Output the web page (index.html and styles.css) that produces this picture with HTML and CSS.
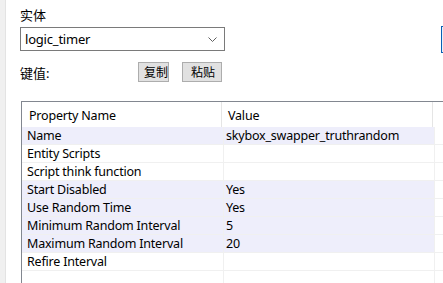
FILE: index.html
```html
<!DOCTYPE html>
<html lang="zh">
<head>
    <meta charset="UTF-8">
    <title>实体属性</title>
    <link rel="stylesheet" href="styles.css">
</head>
<body>
    <div class="side-strip"></div>

    <main class="panel">
        <div class="field-label">实体</div>

        <div class="top-row">
            <div class="combo">
                <span class="combo-text">logic_timer</span>
                <svg class="chevron" width="9" height="5" viewBox="0 0 9 5">
                    <polyline points="0.5,0.5 4.5,4.5 8.5,0.5" fill="none" stroke="#5f5f5f" stroke-width="1"/>
                </svg>
            </div>
            <div class="side-button"></div>
        </div>

        <div class="key-row">
            <span class="key-label">键值:</span>
            <button class="small-btn copy-btn">复制</button>
            <button class="small-btn paste-btn">粘贴</button>
        </div>

        <div class="grid">
            <div class="grid-head">
                <div class="head-cell name-col">Property Name</div>
                <div class="head-cell value-col">Value</div>
                <div class="head-cell filler"></div>
            </div>
            <div class="grid-row changed">
                <div class="cell name-col">Name</div>
                <div class="cell value-col">skybox_swapper_truthrandom</div>
                <div class="cell filler"></div>
            </div>
            <div class="grid-row">
                <div class="cell name-col">Entity Scripts</div>
                <div class="cell value-col"></div>
                <div class="cell filler"></div>
            </div>
            <div class="grid-row">
                <div class="cell name-col">Script think function</div>
                <div class="cell value-col"></div>
                <div class="cell filler"></div>
            </div>
            <div class="grid-row changed">
                <div class="cell name-col">Start Disabled</div>
                <div class="cell value-col">Yes</div>
                <div class="cell filler"></div>
            </div>
            <div class="grid-row changed">
                <div class="cell name-col">Use Random Time</div>
                <div class="cell value-col">Yes</div>
                <div class="cell filler"></div>
            </div>
            <div class="grid-row changed">
                <div class="cell name-col">Minimum Random Interval</div>
                <div class="cell value-col">5</div>
                <div class="cell filler"></div>
            </div>
            <div class="grid-row changed">
                <div class="cell name-col">Maximum Random Interval</div>
                <div class="cell value-col">20</div>
                <div class="cell filler"></div>
            </div>
            <div class="grid-row">
                <div class="cell name-col">Refire Interval</div>
                <div class="cell value-col"></div>
                <div class="cell filler"></div>
            </div>
            <div class="grid-row">
                <div class="cell name-col"></div>
                <div class="cell value-col"></div>
                <div class="cell filler"></div>
            </div>
        </div>
    </main>
</body>
</html>
```

FILE: styles.css
```css
/* Reset */
* {
    margin: 0;
    padding: 0;
    box-sizing: border-box;
}

body {
    width: 443px;
    height: 283px;
    overflow: hidden;
    display: flex;
    background: #fff;
    color: #000;
    font-family: 'Noto Sans', 'Noto Sans CJK SC', sans-serif;
    font-size: 12.5px;
    letter-spacing: -0.2px;
    line-height: 17px;
}

/* Left edge of the dialog */
.side-strip {
    flex: 0 0 6px;
    background: #f0f0f0;
    border-right: 1px solid #e3e3e3;
}

.panel {
    flex: 1;
    padding-left: 14px;
    padding-top: 7px;
    min-width: 0;
    overflow: hidden;
}

.field-label {
    height: 20px;
    font-size: 13px;
    letter-spacing: 0;
}

/* Entity class combo */
.top-row {
    display: flex;
    align-items: flex-start;
    height: 24px;
}

.combo {
    flex: 0 0 205px;
    height: 24px;
    border: 1px solid #7a7a7a;
    display: flex;
    align-items: center;
    justify-content: space-between;
    padding: 0 4px;
}

.combo-text {
    font-size: 13px;
}

.chevron {
    margin-right: 3px;
}

/* focused button peeking in at the right edge */
.side-button {
    flex: 0 0 2px;
    margin-left: 216px;
    margin-top: -1px;
    height: 27px;
    border: 1px solid #0a5fb4;
    border-right: none;
    background: #e5f1fb;
}

/* Key / value row */
.key-row {
    display: flex;
    align-items: center;
    margin-top: 11px;
    height: 20px;
    font-size: 13px;
    letter-spacing: 0;
}

.key-label {
    width: 118px;
    padding-top: 3px;
}

.small-btn {
    height: 20px;
    background: #e1e1e1;
    border: 1px solid #adadad;
    font-family: inherit;
    font-size: 12px;
    line-height: 17px;
    color: #000;
    text-align: left;
    white-space: nowrap;
}

.copy-btn {
    width: 31px;
    padding-left: 5px;
}

.paste-btn {
    width: 40px;
    margin-left: 13px;
    padding-left: 8px;
}

/* Property grid */
.grid {
    margin-top: 19px;
    margin-left: 1px;
    width: 440px;
    border: 1px solid #828790;
    border-right: none;
}

.grid-head {
    display: flex;
    height: 25px;
}

.head-cell {
    padding-top: 5px;
}

.grid-head .name-col {
    width: 200px;
    padding-left: 7px;
    border-right: 1px solid #e5e5e5;
}

.grid-head .value-col {
    width: 211px;
    padding-left: 6px;
    border-right: 1px solid #e5e5e5;
}

.grid-row {
    display: flex;
    height: 18px;
    border-bottom: 1px solid #f0f0f0;
}

.cell {
    height: 17px;
    white-space: nowrap;
}

.grid-row .name-col {
    width: 202px;
    padding-left: 5px;
    border-right: 1px solid #f0f0f0;
}

.grid-row .value-col {
    width: 211px;
    padding-left: 2px;
    border-right: 1px solid #f0f0f0;
}

.filler {
    flex: 1;
}

.grid-row.changed .name-col,
.grid-row.changed .value-col {
    background: #eeeefb;
}
```
